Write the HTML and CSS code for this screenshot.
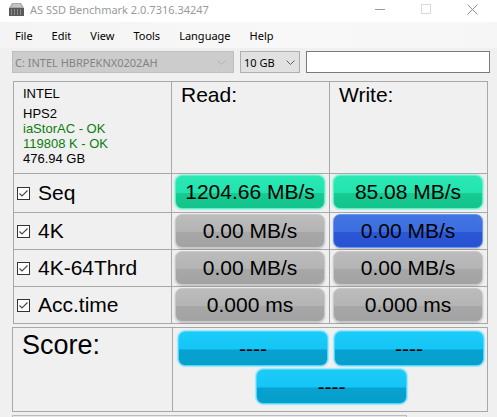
FILE: index.html
```html
<!DOCTYPE html>
<html>
<head>
<meta charset="utf-8">
<title>AS SSD Benchmark</title>
<link rel="stylesheet" href="styles.css">
</head>
<body>
<div class="window">
  <div class="titlebar">
    <svg class="appicon" width="15" height="13" viewBox="0 0 15 13">
      <polygon points="3,0 12,0 15,5 0,5" fill="#a8a8a8"/>
      <polygon points="4,1 11,1 13,4 2,4" fill="#c4c4c4"/>
      <rect x="0" y="5" width="15" height="8" fill="#5a5a5a"/>
      <rect x="2" y="6" width="1" height="6" fill="#8a8a8a"/>
      <rect x="5" y="6" width="1" height="6" fill="#8a8a8a"/>
      <rect x="8" y="6" width="1" height="6" fill="#8a8a8a"/>
      <rect x="11" y="6" width="1" height="6" fill="#8a8a8a"/>
    </svg>
    <span class="title">AS SSD Benchmark 2.0.7316.34247</span>
    <div class="controls">
      <span class="ctl"><svg width="10" height="10" viewBox="0 0 10 10"><line x1="0" y1="5.5" x2="10" y2="5.5" stroke="#9a9a9a" stroke-width="1"/></svg></span>
      <span class="ctl"><svg width="10" height="10" viewBox="0 0 10 10"><rect x="0.5" y="0.5" width="9" height="9" fill="none" stroke="#dadada" stroke-width="1"/></svg></span>
      <span class="ctl"><svg width="11" height="11" viewBox="0 0 11 11"><path d="M0.5 0.5 L10.5 10.5 M10.5 0.5 L0.5 10.5" stroke="#8f8f8f" stroke-width="1" fill="none"/></svg></span>
    </div>
  </div>

  <div class="menubar">
    <span>File</span>
    <span>Edit</span>
    <span>View</span>
    <span>Tools</span>
    <span>Language</span>
    <span>Help</span>
  </div>

  <div class="toolbar">
    <div class="combo drive">
      <span>C: INTEL HBRPEKNX0202AH</span>
      <svg width="9" height="5" viewBox="0 0 9 5"><path d="M0.5 0.5 L4.5 4.5 L8.5 0.5" stroke="#b0b0b0" fill="none"/></svg>
    </div>
    <div class="combo size">
      <span>10 GB</span>
      <svg width="9" height="5" viewBox="0 0 9 5"><path d="M0.5 0.5 L4.5 4.5 L8.5 0.5" stroke="#606060" fill="none"/></svg>
    </div>
    <div class="textbox"></div>
  </div>

  <div class="results">
    <div class="cell info">
      <div class="model">INTEL</div>
      <div class="fw">HPS2</div>
      <div class="ok">iaStorAC - OK</div>
      <div class="ok">119808 K - OK</div>
      <div>476.94 GB</div>
    </div>
    <div class="cell head">Read:</div>
    <div class="cell head">Write:</div>

    <div class="cell label"><span class="check"><svg width="11" height="11" viewBox="0 0 11 11"><path d="M1.5 5.5 L4 8 L9.5 2.5" stroke="#4a4a4a" stroke-width="1.2" fill="none"/></svg></span>Seq</div>
    <div class="cell val"><div class="bar green">1204.66 MB/s</div></div>
    <div class="cell val"><div class="bar green">85.08 MB/s</div></div>

    <div class="cell label"><span class="check"><svg width="11" height="11" viewBox="0 0 11 11"><path d="M1.5 5.5 L4 8 L9.5 2.5" stroke="#4a4a4a" stroke-width="1.2" fill="none"/></svg></span>4K</div>
    <div class="cell val"><div class="bar gray">0.00 MB/s</div></div>
    <div class="cell val"><div class="bar blue">0.00 MB/s</div></div>

    <div class="cell label"><span class="check"><svg width="11" height="11" viewBox="0 0 11 11"><path d="M1.5 5.5 L4 8 L9.5 2.5" stroke="#4a4a4a" stroke-width="1.2" fill="none"/></svg></span>4K-64Thrd</div>
    <div class="cell val"><div class="bar gray">0.00 MB/s</div></div>
    <div class="cell val"><div class="bar gray">0.00 MB/s</div></div>

    <div class="cell label"><span class="check"><svg width="11" height="11" viewBox="0 0 11 11"><path d="M1.5 5.5 L4 8 L9.5 2.5" stroke="#4a4a4a" stroke-width="1.2" fill="none"/></svg></span>Acc.time</div>
    <div class="cell val"><div class="bar gray">0.000 ms</div></div>
    <div class="cell val"><div class="bar gray">0.000 ms</div></div>
  </div>

  <div class="score">
    <div class="cell scorelabel">Score:</div>
    <div class="cell scorebars">
      <div class="scorerow">
        <div class="bar cyan">----</div>
        <div class="bar cyan">----</div>
      </div>
      <div class="scorerow total">
        <div class="bar cyan wide">----</div>
      </div>
    </div>
  </div>

  <div class="progress"></div>
</div>
</body>
</html>
```

FILE: styles.css
```css
html, body {
  margin: 0;
  padding: 0;
  background: #f0f0f0;
}

.window {
  width: 497px;
  height: 417px;
  overflow: hidden;
  background: #f0f0f0;
  font-family: "Liberation Sans", Arial, sans-serif;
  color: #000;
}

/* Title bar */
.titlebar {
  height: 22px;
  background: #ffffff;
  display: flex;
  align-items: center;
  padding-left: 9px;
  padding-bottom: 1px;
  box-sizing: border-box;
}
.appicon {
  display: block;
  margin-right: 6px;
  margin-top: -2px;
}
.title {
  font-family: "Noto Sans", sans-serif;
  font-size: 11px;
  color: #9a9a9a;
  margin-top: -2px;
}
.controls {
  margin-left: auto;
  margin-right: 2px;
  display: flex;
  align-self: stretch;
}
.ctl {
  width: 46px;
  display: flex;
  align-items: center;
  justify-content: center;
  padding-bottom: 3px;
}
.ctl svg { display: block; }

/* Menu bar */
.menubar {
  height: 26px;
  background: linear-gradient(to right, #f4f4f4, #f8f8f8 60%, #f6f6f6);
  display: flex;
  align-items: center;
  gap: 19px;
  padding-left: 15px;
  font-family: "Noto Sans", sans-serif;
  font-size: 11px;
  color: #000;
  box-sizing: border-box;
}

/* Toolbar */
.toolbar {
  margin-top: 3px;
  padding-left: 12px;
  height: 22px;
  display: flex;
  gap: 6px;
  font-family: "Noto Sans", sans-serif;
  font-size: 11px;
}
.combo {
  box-sizing: border-box;
  height: 22px;
  display: flex;
  align-items: center;
  justify-content: space-between;
}
.combo svg { display: block; }
.drive {
  width: 222px;
  background: #cccccc;
  border: 1px solid #bfbfbf;
  color: #838383;
  padding: 0 7px 0 2px;
}
.size {
  width: 60px;
  background: #e1e1e1;
  border: 1px solid #adadad;
  color: #000;
  padding: 0 4px 0 3px;
}
.textbox {
  width: 184px;
  height: 22px;
  box-sizing: border-box;
  background: #ffffff;
  border: 1px solid #7a7a7a;
}

/* Results table */
.results {
  margin: 8px 0 0 13px;
  width: 475px;
  box-sizing: border-box;
  display: grid;
  grid-template-columns: 157px 157px 157px;
  grid-template-rows: 91px 38px 36px 36px 36px;
  gap: 1px;
  padding: 1px;
  background: #a8a8a8;
}
.cell {
  background: #f0f0f0;
  box-sizing: border-box;
}
.info {
  padding: 4px 0 0 9px;
  font-size: 13px;
  line-height: 15px;
}
.info .fw { margin-top: 5px; }
.info .ok { color: #0b7d0b; }
.head {
  padding: 1px 0 0 9px;
  font-size: 21px;
}
.label {
  display: flex;
  align-items: center;
  padding-left: 3px;
  font-size: 21px;
}
.check {
  width: 13px;
  height: 13px;
  box-sizing: border-box;
  border: 1px solid #333;
  background: #fff;
  margin-right: 8px;
  display: flex;
  align-items: center;
  justify-content: center;
}
.check svg { display: block; }
.val {
  padding: 1px 0 0 3px;
}

/* Bars */
.bar {
  width: 150px;
  height: 34px;
  box-sizing: border-box;
  border-radius: 7px;
  border: 1px solid;
  display: flex;
  align-items: center;
  justify-content: center;
  font-size: 21px;
  color: #000;
}
.green {
  background: linear-gradient(#2ae8b4 0%, #22e4ae 52%, #17cb93 54%, #13c48c 100%);
  border-color: #5ff0cb;
  box-shadow: 0 0 1px 1px rgba(90, 240, 200, 0.5);
}
.gray {
  background: linear-gradient(#bcbcbc 0%, #b4b4b4 52%, #a7a7a7 54%, #a3a3a3 100%);
  border-color: #c8c8c8;
  box-shadow: 0 1px 2px rgba(0, 0, 0, 0.22);
}
.blue {
  background: linear-gradient(#4274e2 0%, #3c6ee0 52%, #2b58d6 54%, #2752d2 100%);
  border-color: #6a96f0;
  box-shadow: 0 1px 2px rgba(0, 0, 0, 0.2);
}
.cyan {
  background: linear-gradient(#1ccbf8 0%, #14c6f6 52%, #08a2d0 54%, #079ecb 100%);
  border-color: #48d9ff;
  box-shadow: 0 0 1px 1px rgba(70, 215, 255, 0.45);
}

/* Score */
.score {
  margin: 3px 0 0 12px;
  width: 476px;
  height: 85px;
  box-sizing: border-box;
  display: grid;
  grid-template-columns: 159px 314px;
  gap: 1px;
  padding: 1px;
  background: #a8a8a8;
}
.scorelabel {
  padding: 2px 0 0 9px;
  font-size: 27px;
}
.scorebars {
  padding: 3px 0 0 5px;
}
.scorerow {
  display: flex;
  gap: 6px;
  height: 35px;
}
.scorerow .bar { height: 35px; }
.scorerow.total {
  margin-top: 3px;
  padding-left: 78px;
}
.bar.wide { width: 151px; }

.progress {
  margin: 3px 0 0 12px;
  width: 395px;
  height: 10px;
  box-sizing: border-box;
  border: 1px solid #bcbcbc;
  background: #e6e6e6;
}
```
